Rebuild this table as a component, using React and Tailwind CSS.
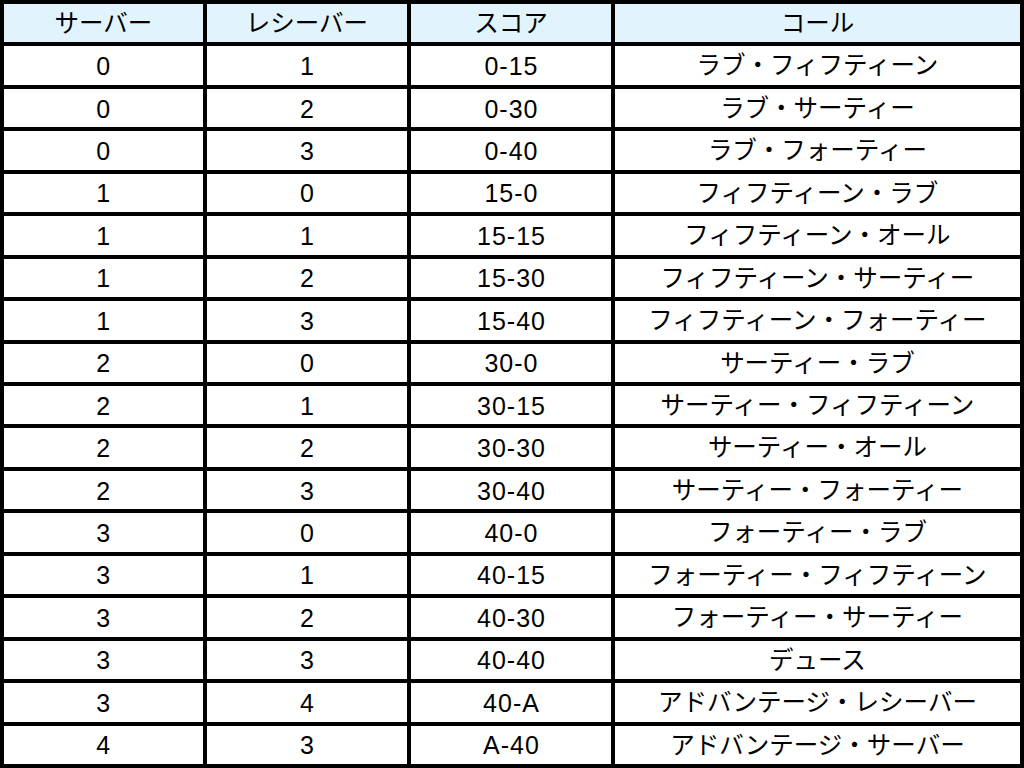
import React from "react";

const rows = [
  ["0", "1", "0-15", "ラブ・フィフティーン"],
  ["0", "2", "0-30", "ラブ・サーティー"],
  ["0", "3", "0-40", "ラブ・フォーティー"],
  ["1", "0", "15-0", "フィフティーン・ラブ"],
  ["1", "1", "15-15", "フィフティーン・オール"],
  ["1", "2", "15-30", "フィフティーン・サーティー"],
  ["1", "3", "15-40", "フィフティーン・フォーティー"],
  ["2", "0", "30-0", "サーティー・ラブ"],
  ["2", "1", "30-15", "サーティー・フィフティーン"],
  ["2", "2", "30-30", "サーティー・オール"],
  ["2", "3", "30-40", "サーティー・フォーティー"],
  ["3", "0", "40-0", "フォーティー・ラブ"],
  ["3", "1", "40-15", "フォーティー・フィフティーン"],
  ["3", "2", "40-30", "フォーティー・サーティー"],
  ["3", "3", "40-40", "デュース"],
  ["3", "4", "40-A", "アドバンテージ・レシーバー"],
  ["4", "3", "A-40", "アドバンテージ・サーバー"],
];

const headers = ["サーバー", "レシーバー", "スコア", "コール"];

export default function App() {
  return (
    <div className="w-[1024px] h-[768px] bg-black p-[4px] font-['Liberation_Sans','Noto_Sans_CJK_JP',sans-serif] text-[24.5px] text-black">
      <div className="grid h-full grid-cols-[198fr_200fr_199fr_404fr] grid-rows-[repeat(18,minmax(0,1fr))] gap-[4px]">
        {headers.map((h) => (
          <div key={h} className="flex items-center justify-center bg-[#e1f4fd] pt-[2px] leading-none">
            {h}
          </div>
        ))}
        {rows.map((r, i) =>
          r.map((c, j) => (
            <div
              key={i + "-" + j}
              className={
                j < 3
                  ? "flex items-center justify-center bg-white pt-[2px] pl-[1px] text-[25px] leading-none tracking-[1px]"
                  : "flex items-center justify-center bg-white pt-[2px] leading-none"
              }
            >
              {c}
            </div>
          ))
        )}
      </div>
    </div>
  );
}
